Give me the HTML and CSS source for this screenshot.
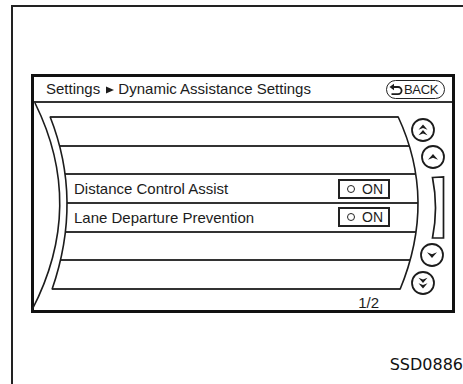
FILE: index.html
```html
<!DOCTYPE html>
<html>
<head>
<meta charset="utf-8">
<link rel="stylesheet" href="styles.css">
</head>
<body>
<div class="frame">
  <div class="screen">
    <div class="hdr">
      <div class="crumb">Settings<svg class="tri" viewBox="0 0 8 8"><polygon points="0,0.5 8,4 0,7.5" fill="#1c1c1c"/></svg> Dynamic Assistance Settings</div>
      <div class="back">
        <svg class="back-ico" viewBox="0 0 15 13"><polygon points="0.5,4 5,0.8 5,7.2" fill="#1c1c1c"/><path d="M4.5 4 H9 A3.6 3.6 0 0 1 9 11.2 H2.5" fill="none" stroke="#1c1c1c" stroke-width="1.8"/></svg>
        <span>BACK</span>
      </div>
    </div>
    <div class="body">
      <div class="listcol">
        <div class="list">
          <div class="row"></div>
          <div class="row"></div>
          <div class="row"><span>Distance Control Assist</span><span class="toggle"><i class="dot"></i>ON</span></div>
          <div class="row"><span>Lane Departure Prevention</span><span class="toggle"><i class="dot"></i>ON</span></div>
          <div class="row"></div>
          <div class="row"></div>
        </div>
        <div class="page">1/2</div>
      </div>
      <div class="ctrls">
        <svg class="btn b1" viewBox="0 0 24 24"><circle cx="12" cy="12" r="11" fill="none" stroke="#1c1c1c" stroke-width="1.8"/><path d="M7.5 11.8 L12 6.5 L16.5 11.8 L12 9.9 Z M7.5 17.3 L12 12 L16.5 17.3 L12 15.4 Z" fill="#1c1c1c"/></svg>
        <svg class="btn b2" viewBox="0 0 24 24"><circle cx="12" cy="12" r="11" fill="none" stroke="#1c1c1c" stroke-width="1.8"/><path d="M7 14.8 L12 9 L17 14.8 L12 12.8 Z" fill="#1c1c1c"/></svg>
        <svg class="bar" viewBox="0 0 14 63"><path d="M1.5 1.5 L12.5 1 L12.5 62 L1.5 62 Q7.5 31.5 1.5 1.5 Z" fill="none" stroke="#1c1c1c" stroke-width="1.7"/></svg>
        <svg class="btn b3" viewBox="0 0 24 24"><circle cx="12" cy="12" r="11" fill="none" stroke="#1c1c1c" stroke-width="1.8"/><path d="M7 9.2 L12 15 L17 9.2 L12 11.2 Z" fill="#1c1c1c"/></svg>
        <svg class="btn b4" viewBox="0 0 24 24"><circle cx="12" cy="12" r="11" fill="none" stroke="#1c1c1c" stroke-width="1.8"/><path d="M7.5 6.7 L12 12 L16.5 6.7 L12 8.6 Z M7.5 12.2 L12 17.5 L16.5 12.2 L12 14.1 Z" fill="#1c1c1c"/></svg>
      </div>
      <svg class="edges" viewBox="34 103 418 207">
        <path d="M35 103 Q86 206 32 310" fill="none" stroke="#1c1c1c" stroke-width="1.6"/>
        <path d="M50 116.5 Q83 200 52 289.5" fill="none" stroke="#1c1c1c" stroke-width="1.6"/>
        <path d="M398 116.5 Q437 200 400 289.5" fill="none" stroke="#1c1c1c" stroke-width="1.6"/>
      </svg>
    </div>
  </div>
  <div class="code">SSD0886</div>
</div>
</body>
</html>
```

FILE: styles.css
```css
html, body {
  margin: 0;
  padding: 0;
  background: #fff;
  overflow: hidden;
}

body {
  width: 463px;
  height: 384px;
  font-family: "Liberation Sans", Arial, sans-serif;
  color: #1c1c1c;
}

.frame {
  margin: 5px 0 0 11px;
  height: 377px;
  border-top: 2px solid #222;
  border-left: 2px solid #222;
}

.screen {
  margin: 67px 0 0 18px;
  width: 424px;
  height: 239px;
  box-sizing: border-box;
  border: 3px solid #111;
  display: flex;
  flex-direction: column;
}

.hdr {
  height: 24px;
  flex: none;
  border-bottom: 2px solid #333;
  display: flex;
  align-items: center;
  justify-content: space-between;
  padding: 0 7px 0 12px;
  font-size: 15px;
}

.crumb {
  line-height: 24px;
  white-space: nowrap;
}

.tri {
  width: 8px;
  height: 8px;
  margin: 0 0 0 6px;
  vertical-align: 0;
}

.back {
  display: flex;
  align-items: center;
  width: 59px;
  height: 19px;
  box-sizing: border-box;
  border: 1.5px solid #222;
  border-radius: 10px;
  padding-left: 2px;
  font-size: 13px;
  letter-spacing: -0.3px;
}

.back-ico {
  width: 15px;
  height: 13px;
  flex: none;
}

.body {
  position: relative;
  height: 207px;
  display: grid;
  grid-template-columns: 376px 1fr;
}

.list {
  margin-top: 13px;
  width: 386px;
  height: 174px;
  box-sizing: border-box;
  border-top: 2px solid #333;
  clip-path: path('M16 0 L364 0 Q403 84 366 174 L18 174 Q49 84 16 0 Z');
}

.row {
  height: 28.67px;
  box-sizing: border-box;
  border-bottom: 2px solid #333;
  display: flex;
  align-items: center;
  justify-content: space-between;
  padding: 0 30px 0 40px;
  font-size: 15px;
  white-space: nowrap;
}

.toggle {
  display: flex;
  align-items: center;
  gap: 7px;
  width: 52px;
  height: 20px;
  box-sizing: border-box;
  border: 2px solid #222;
  padding-left: 7px;
  font-size: 14px;
}

.dot {
  display: block;
  width: 8px;
  height: 8px;
  box-sizing: border-box;
  border: 1.8px solid #222;
  border-radius: 50%;
}

.page {
  margin-top: 5px;
  padding-right: 31px;
  text-align: right;
  font-size: 15px;
  line-height: 16px;
}

.ctrls {
  display: flex;
  flex-direction: column;
  align-items: flex-start;
  padding-top: 15px;
}

.btn {
  display: block;
  width: 24px;
  height: 24px;
}

.b1 { margin-left: 1px; }
.b2 { margin: 3px 0 0 11px; }
.bar {
  display: block;
  width: 14px;
  height: 63px;
  margin: 7px 0 0 21px;
}
.b3 { margin: 4px 0 0 10px; }
.b4 { margin: 4px 0 0 1px; }

.edges {
  position: absolute;
  left: 0;
  top: 0;
  width: 418px;
  height: 207px;
  pointer-events: none;
  overflow: visible;
}

.code {
  margin-top: 42px;
  text-align: right;
  font-family: "DejaVu Sans", sans-serif;
  font-size: 16px;
  line-height: 19px;
  color: #111;
}
```
